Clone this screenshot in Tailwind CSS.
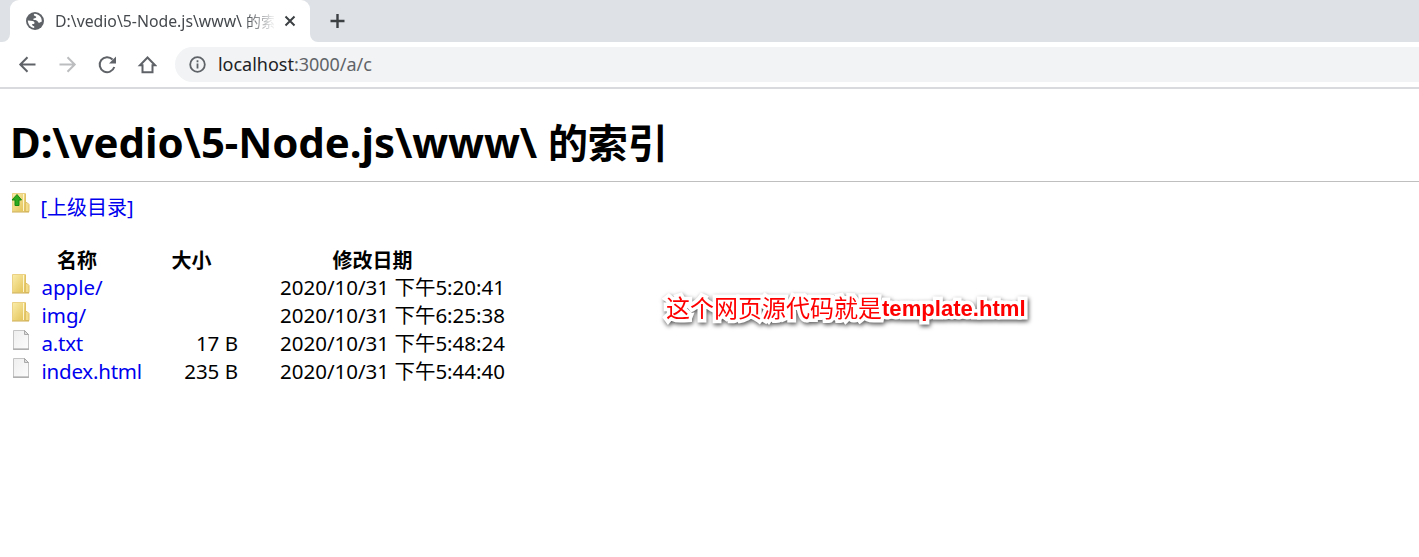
<!DOCTYPE html>
<html lang="zh-CN">
<head>
<meta charset="utf-8">
<title>D:\vedio\5-Node.js\www\ 的索引</title>
<script src="https://cdn.jsdelivr.net/npm/@tailwindcss/browser@4"></script>
</head>
<body class="relative h-[557px] overflow-hidden bg-white font-['Noto_Sans','Noto_Sans_CJK_SC',sans-serif] text-black">
<svg class="absolute size-0">
  <defs>
    <linearGradient id="gold" x1="0" y1="0" x2="1" y2="1"><stop offset="0" stop-color="#faedab"/><stop offset="1" stop-color="#e2c052"/></linearGradient>
    <linearGradient id="paper" x1="0" y1="0" x2="1" y2="1"><stop offset="0" stop-color="#eeeeee"/><stop offset="1" stop-color="#fcfcfc"/></linearGradient>
  </defs>
  <symbol id="folder" viewBox="0 0 20 20">
    <path d="M2.500.5h13v18h-13z" fill="url(#gold)" stroke="#ead183"/>
    <path d="M15.500 9.500h1.500l2 2v7h-4z" fill="#f4dd8a" stroke="#dfc067"/>
    <path d="M13.500 1v17" stroke="#fdf5d0"/><path d="M15.500 1v17" stroke="#dfc067"/>
    <path d="M2 19h17" stroke="#cfae50"/>
  </symbol>
  <symbol id="file" viewBox="0 0 20 20">
    <path d="M3.500.5h11l4 4v14.500h-15z" fill="url(#paper)" stroke="#c4c4c4"/>
    <path d="M14.500 .5v4h4z" fill="#ddd" stroke="#999" stroke-width=".8"/>
    <path d="M3 19.200h16" stroke="#999"/>
  </symbol>
</svg>

<header>
  <div class="flex h-[42px] bg-[#dee1e6]">
    <div class="h-full w-[10px] bg-white"><div class="h-full rounded-br-[8px] bg-[#dee1e6]"></div></div>
    <div class="flex h-full w-[300px] items-center rounded-t-[9px] bg-white pl-4">
      <svg class="size-[18px] shrink-0" viewBox="0 0 18 18"><circle cx="9" cy="9" r="9" fill="#5f6368"/><path d="M8.500 1.800C7 3 8 4 9.500 4.200c1.500.3.500 2-1 2.100-1.500.1-1.500 1.700-.5 1.700 2 0 3.500.5 4 2s2 .5 3.800-.5c.2-3.500-2-7.200-7.300-7.700zM1.800 8.500C2 12.500 4.500 15.800 8.200 16v-1.800C6.500 14 6 13 6.200 12c1.500.2 2.500-.3 2.300-1.500C8.200 9 6 8.600 1.800 8.500z" fill="#fff"/></svg>
      <div class="ml-[11px] w-[219px] overflow-hidden whitespace-nowrap text-[15.800px] leading-5 text-[#45494d] [mask-image:linear-gradient(to_right,black_190px,transparent_221px)]">D:\vedio\5-Node.js\www\ <span class="text-[15px]">的索引</span></div>
      <svg class="ml-[10px] size-3 shrink-0" viewBox="0 0 12 12"><path d="M1.500 1.500l9 9M10.500 1.500l-9 9" stroke="#3c4043" stroke-width="2"/></svg>
    </div>
    <div class="h-full w-[10px] bg-white"><div class="h-full rounded-bl-[8px] bg-[#dee1e6]"></div></div>
    <svg class="ml-[9px] mt-[13px] size-4" viewBox="0 0 16 16"><path d="M8.500 1v14M1.500 8h14" stroke="#3c4043" stroke-width="2.400"/></svg>
  </div>
  <div class="flex h-[47px] items-center border-b-2 border-[#d9dade] pl-[17px]">
    <svg class="size-5" viewBox="0 0 20 20" fill="none" stroke="#5f6368" stroke-width="2"><path d="M18.500 9.500H3.500M10.500 2.300L3.300 9.500l7.200 7.200"/></svg>
    <svg class="ml-5 size-5" viewBox="0 0 20 20" fill="none" stroke="#bbbdbf" stroke-width="2"><path d="M2.500 9.500h15M10.500 2.300l7.200 7.200-7.200 7.200"/></svg>
    <svg class="ml-5 size-5" viewBox="0 0 20 20" fill="none" stroke="#5f6368" stroke-width="2"><path d="M17.300 12A7.500 7.500 0 1 1 15.600 4.500"/><path d="M19 1.500v7h-7z" fill="#5f6368" stroke="none"/></svg>
    <svg class="ml-5 size-5" viewBox="0 0 20 20" fill="none" stroke="#5f6368" stroke-width="2"><path d="M3 10.200H5.500V17.200h10V10.200h2.500L10.500 2.500z"/></svg>
    <div class="ml-[18px] flex h-[35px] flex-1 items-center rounded-l-full bg-[#f1f3f4] pl-[14px]">
      <svg class="size-[17px]" viewBox="0 0 17 17" fill="none" stroke="#5f6368"><circle cx="8.500" cy="8.500" r="7.300" stroke-width="1.800"/><path d="M8.500 7.600v5M8.500 4.300v2" stroke-width="1.800"/></svg>
      <span class="mb-[2px] ml-[12px] text-[18px] leading-6 tracking-[-0.02px] text-[#5f6368]"><span class="text-[#202124]">localhost</span>:3000/a/c</span>
    </div>
  </div>
</header>

<main class="pl-[10px]">
  <h1 class="h-[93px] whitespace-pre border-b border-[#bfbfbf] pt-[26px] text-[42px] font-bold leading-[54px] tracking-[-0.1px]">D:\vedio\5-Node.js\www\ <span class="text-[40px]">的索引</span></h1>
  <a class="mt-[10px] flex h-7 w-fit text-[20px] leading-8 text-[#0000ee]"><svg class="mt-px mr-[10.500px] size-5"><use href="#folder"/><path d="M7 1.500L11.500 7H9v5.500H5V7H2z" fill="#2eaa1e" stroke="#168a10"/></svg>[上级目录]</a>
  <table class="mt-[26px] table-fixed border-collapse text-[20.500px] leading-7">
    <colgroup><col class="w-[134px]"><col class="w-[95px]"><col class="w-[267px]"></colgroup>
    <thead class="text-[20px] font-bold"><tr class="h-7"><th class="p-0 leading-[26px] pt-0.5">名称</th><th class="p-0 leading-[26px] pt-0.5">大小</th><th class="p-0 leading-[26px] pt-0.5">修改日期</th></tr></thead>
    <tbody>
      <tr class="h-7"><td class="text-[#0000ee]"><div class="flex h-7 leading-[26px]"><svg class="mr-[11.500px] size-5"><use href="#folder"/></svg>apple/</div></td><td></td><td class="pl-[41px] pb-0.5 leading-[26px] whitespace-nowrap">2020/10/31 下午5:20:41</td></tr>
      <tr class="h-7"><td class="text-[#0000ee]"><div class="flex h-7 leading-[26px]"><svg class="mr-[11.500px] size-5"><use href="#folder"/></svg>img/</div></td><td></td><td class="pl-[41px] pb-0.5 leading-[26px] whitespace-nowrap">2020/10/31 下午6:25:38</td></tr>
      <tr class="h-7"><td class="text-[#0000ee]"><div class="flex h-7 leading-[26px] tracking-[-0.22px]"><svg class="mr-[11.500px] size-5"><use href="#file"/></svg>a.txt</div></td><td class="pb-0.5 pr-px leading-[26px] text-right">17 B</td><td class="pl-[41px] pb-0.5 leading-[26px] whitespace-nowrap">2020/10/31 下午5:48:24</td></tr>
      <tr class="h-7"><td class="text-[#0000ee]"><div class="flex h-7 leading-[26px] tracking-[-0.22px]"><svg class="mr-[11.500px] size-5"><use href="#file"/></svg>index.html</div></td><td class="pb-0.5 pr-px leading-[26px] text-right">235 B</td><td class="pl-[41px] pb-0.5 leading-[26px] whitespace-nowrap">2020/10/31 下午5:44:40</td></tr>
    </tbody>
  </table>
</main>

<div class="absolute left-[666px] top-[291px] flex whitespace-nowrap text-[24px] leading-8 text-[#ff0000] [paint-order:stroke_fill] [-webkit-text-stroke:7px_white] drop-shadow-[1px_2px_2px_rgba(0,0,0,0.65)]"><span class="font-['Noto_Sans_CJK_SC',sans-serif] font-normal">这个网页源代码就是</span><span class="pt-[2px] font-['Liberation_Sans',sans-serif] text-[22.100px] font-bold">template.html</span></div>
</body>
</html>
